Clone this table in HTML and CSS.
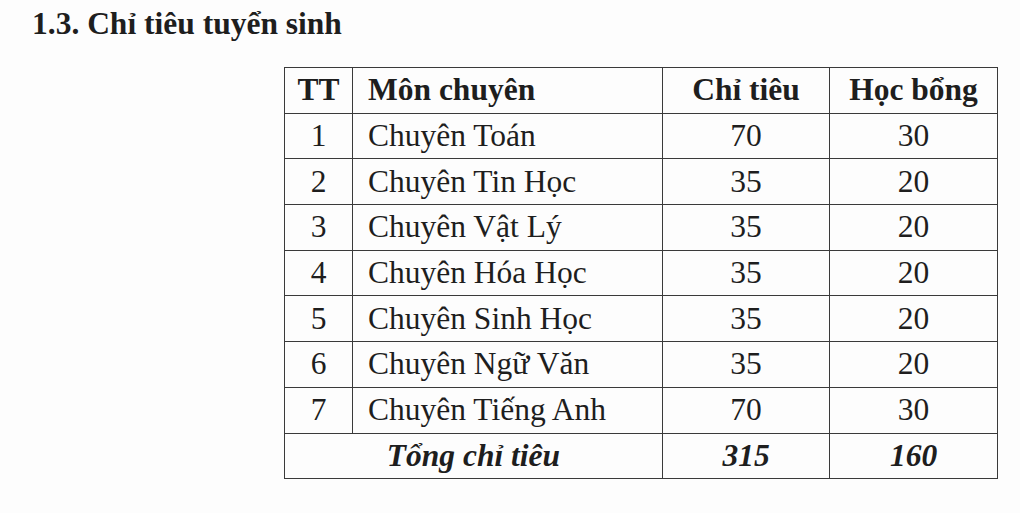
FILE: index.html
```html
<!DOCTYPE html>
<html lang="vi">
<head>
<meta charset="utf-8">
<link rel="stylesheet" href="styles.css">
</head>
<body>
<div class="page">
  <h2 class="heading">1.3. Chỉ tiêu tuyển sinh</h2>
  <table class="quota">
    <colgroup>
      <col class="c-tt"><col class="c-mon"><col class="c-ct"><col class="c-hb">
    </colgroup>
    <thead>
      <tr><th>TT</th><th class="left">Môn chuyên</th><th>Chỉ tiêu</th><th>Học bổng</th></tr>
    </thead>
    <tbody>
      <tr><td>1</td><td class="left">Chuyên Toán</td><td>70</td><td>30</td></tr>
      <tr><td>2</td><td class="left">Chuyên Tin Học</td><td>35</td><td>20</td></tr>
      <tr><td>3</td><td class="left">Chuyên Vật Lý</td><td>35</td><td>20</td></tr>
      <tr><td>4</td><td class="left">Chuyên Hóa Học</td><td>35</td><td>20</td></tr>
      <tr><td>5</td><td class="left">Chuyên Sinh Học</td><td>35</td><td>20</td></tr>
      <tr><td>6</td><td class="left">Chuyên Ngữ Văn</td><td>35</td><td>20</td></tr>
      <tr><td>7</td><td class="left">Chuyên Tiếng Anh</td><td>70</td><td>30</td></tr>
      <tr class="total"><td colspan="2">Tổng chỉ tiêu</td><td>315</td><td>160</td></tr>
    </tbody>
  </table>
</div>
</body>
</html>
```
FILE: styles.css
```css
html, body {
  margin: 0;
  padding: 0;
  background: #fdfdfd;
}
.page {
  width: 1020px;
  height: 513px;
  font-family: "Liberation Serif", "Times New Roman", serif;
  color: #1e1e1e;
  padding: 6px 0 0 32px;
  box-sizing: border-box;
}
.heading {
  margin: 0;
  font-size: 31.5px;
  font-weight: bold;
  line-height: 36px;
}
.quota {
  margin: 25px 0 0 252px;
  border-collapse: collapse;
  font-size: 31.5px;
  table-layout: fixed;
  width: 713px;
}
.c-tt { width: 68px; }
.c-mon { width: 310px; }
.c-ct { width: 167px; }
.c-hb { width: 168px; }
.quota th, .quota td {
  border: 1.5px solid #3a3a3a;
  height: 45.7px;
  padding: 0;
  text-align: center;
  vertical-align: middle;
  box-sizing: border-box;
  line-height: 36px;
}
.quota th { font-weight: bold; }
.quota .left { text-align: left; padding-left: 15px; }
.total td { font-weight: bold; font-style: italic; }
```
